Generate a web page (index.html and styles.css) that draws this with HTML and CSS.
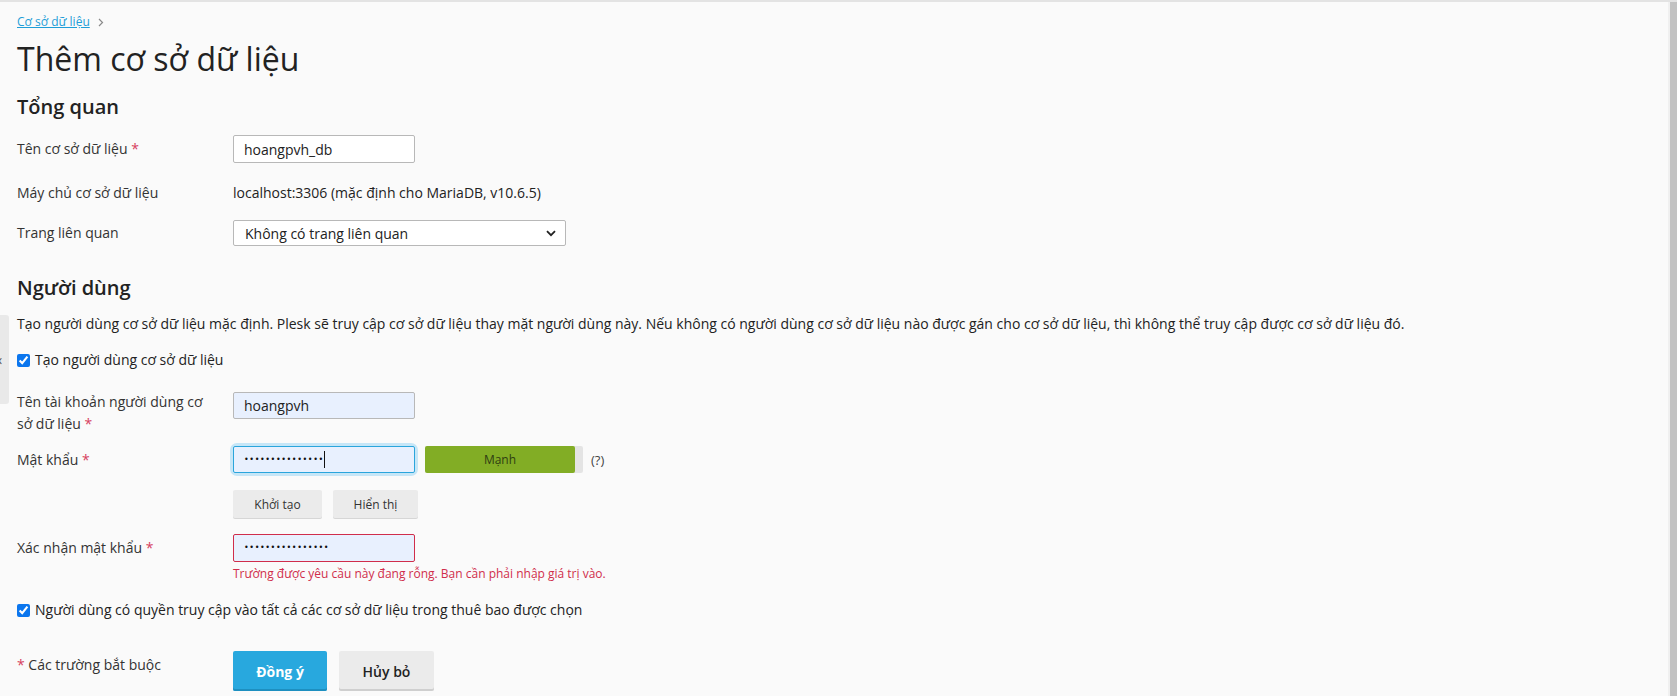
FILE: index.html
```html
<!DOCTYPE html>
<html lang="vi">
<head>
<meta charset="utf-8">
<title>Thêm cơ sở dữ liệu</title>
<link rel="stylesheet" href="styles.css">
</head>
<body>
<div class="frame">
  <div class="side-tab"><span class="side-arrow">‹</span></div>
  <main class="page">
    <nav class="breadcrumb"><a href="#">Cơ sở dữ liệu</a>
      <svg class="crumb-sep" width="6" height="9" viewBox="0 0 6 9"><path d="M1 1 4.5 4.5 1 8" fill="none" stroke="#8a8a8a" stroke-width="1.2"/></svg>
    </nav>
    <h1 class="title">Thêm cơ sở dữ liệu</h1>

    <h2 class="section">Tổng quan</h2>
    <div class="row row-db">
      <label class="label">Tên cơ sở dữ liệu <span class="req">*</span></label>
      <input class="field" type="text" value="hoangpvh_db">
    </div>
    <div class="row row-host">
      <div class="label">Máy chủ cơ sở dữ liệu</div>
      <div class="value">localhost:3306 (mặc định cho MariaDB, v10.6.5)</div>
    </div>
    <div class="row row-site">
      <label class="label">Trang liên quan</label>
      <div class="select"><span>Không có trang liên quan</span>
        <svg class="chev" width="10" height="7" viewBox="0 0 10 7"><path d="M1 1.2 5 5.2 9 1.2" fill="none" stroke="#222" stroke-width="1.8"/></svg>
      </div>
    </div>

    <h2 class="section section-user">Người dùng</h2>
    <p class="desc">Tạo người dùng cơ sở dữ liệu mặc định. Plesk sẽ truy cập cơ sở dữ liệu thay mặt người dùng này. Nếu không có người dùng cơ sở dữ liệu nào được gán cho cơ sở dữ liệu, thì không thể truy cập được cơ sở dữ liệu đó.</p>
    <label class="check check-create"><input type="checkbox" checked> Tạo người dùng cơ sở dữ liệu</label>

    <div class="row row-user">
      <label class="label label-wrap">Tên tài khoản người dùng cơ sở dữ liệu <span class="req">*</span></label>
      <input class="field autofill" type="text" value="hoangpvh">
    </div>
    <div class="row row-pass">
      <label class="label">Mật khẩu <span class="req">*</span></label>
      <div class="focus-wrap"><div class="field autofill focused"><span class="dots">•••••••••••••••</span><span class="caret"></span></div></div>
      <div class="meter"><div class="meter-fill">Mạnh</div></div>
      <span class="hint">(?)</span>
    </div>
    <div class="row row-gen">
      <div class="label"></div>
      <button class="btn btn-small btn-gen">Khởi tạo</button>
      <button class="btn btn-small btn-show">Hiển thị</button>
    </div>
    <div class="row row-confirm">
      <label class="label">Xác nhận mật khẩu <span class="req">*</span></label>
      <div class="field autofill invalid"><span class="dots">••••••••••••••••</span></div>
    </div>
    <div class="row row-error">
      <div class="label"></div>
      <div class="error">Trường được yêu cầu này đang rỗng. Bạn cần phải nhập giá trị vào.</div>
    </div>
    <label class="check check-access"><input type="checkbox" checked> Người dùng có quyền truy cập vào tất cả các cơ sở dữ liệu trong thuê bao được chọn</label>

    <div class="row row-actions">
      <div class="label"><span class="req">*</span> Các trường bắt buộc</div>
      <button class="btn btn-primary">Đồng ý</button>
      <button class="btn btn-cancel">Hủy bỏ</button>
    </div>
  </main>
  <div class="scrollbar"></div>
</div>
</body>
</html>
```
FILE: styles.css
```css
html, body {
  margin: 0;
  padding: 0;
  height: 100%;
  overflow: hidden;
}
body {
  background: #fafafa;
  font-family: "Open Sans", "Noto Sans", sans-serif;
  color: #222;
  font-size: 14px;
}
.frame {
  position: relative;
  height: 696px;
  border-top: 2px solid #e3e3e3;
  box-sizing: border-box;
  display: flex;
}
.page {
  flex: 1;
  padding: 0 17px;
}
.side-tab {
  position: absolute;
  left: 0;
  top: 313px;
  width: 9px;
  height: 89px;
  background: #e9e9e9;
  border-radius: 0 3px 3px 0;
}
.side-arrow {
  position: absolute;
  left: -2px;
  top: 38px;
  font-size: 14px;
  color: #555;
  line-height: 14px;
}
.scrollbar {
  width: 7px;
  background: #c2c2c2;
  border-left: 2px solid #f0f0f0;
}
.breadcrumb {
  margin-top: 12px;
  font-size: 12px;
  line-height: 16px;
  display: flex;
  align-items: center;
}
.breadcrumb a {
  color: #1f9ed8;
  text-decoration: underline;
}
.crumb-sep {
  margin-left: 8px;
}
.title {
  margin: 9px 0 0;
  font-size: 32px;
  font-weight: 400;
  line-height: 40px;
  color: #222;
}
.section {
  margin: 14px 0 0;
  font-size: 20px;
  font-weight: 600;
  line-height: 28px;
  color: #222;
}
.row {
  display: flex;
  align-items: flex-start;
}
.label {
  width: 216px;
  flex: none;
  line-height: 20px;
  color: #333;
}
.label-wrap {
  width: 196px;
  margin-right: 20px;
  line-height: 22px;
}
.req {
  color: #d6405e;
}
.row-db {
  margin-top: 14px;
  align-items: center;
}
.field {
  box-sizing: border-box;
  width: 182px;
  height: 28px;
  border: 1px solid #b8b8b8;
  border-radius: 2px;
  background: #fff;
  font-family: inherit;
  font-size: 14px;
  color: #222;
  padding: 0 10px;
  outline: none;
  display: flex;
  align-items: center;
}
.autofill {
  background: #e8f0fe;
  height: 27px;
}
.row-host {
  margin-top: 20px;
}
.value {
  line-height: 20px;
}
.row-site {
  margin-top: 17px;
  align-items: center;
}
.select {
  box-sizing: border-box;
  width: 333px;
  height: 26px;
  border: 1px solid #b8b8b8;
  border-radius: 2px;
  background: #fff;
  display: flex;
  align-items: center;
  justify-content: space-between;
  padding: 0 9px 0 11px;
}
.section-user {
  margin-top: 28px;
}
.desc {
  margin: 12px 0 0;
  line-height: 20px;
}
.check {
  display: flex;
  align-items: center;
  line-height: 20px;
}
.check input {
  margin: 0 5px 0 0;
  width: 13px;
  height: 13px;
  accent-color: #0b76ee;
}
.check-create {
  margin-top: 16px;
}
.row-user {
  margin-top: 21px;
}
.row-user .field {
  margin-top: 1px;
}
.row-pass {
  margin-top: 11px;
  align-items: center;
}
.focus-wrap {
  border-radius: 4px;
  box-shadow: 0 0 0 3px #c6e6f7;
}
.focused {
  border-color: #2aa5dc;
}
.dots {
  font-family: "DejaVu Sans", sans-serif;
  font-size: 8px;
  letter-spacing: 0.6px;
  line-height: 12px;
  color: #111;
}
.caret {
  display: inline-block;
  width: 1px;
  height: 17px;
  background: #111;
  margin-left: 0;
}
.meter {
  margin-left: 10px;
  width: 158px;
  height: 27px;
  background: #e4e4e4;
  border-radius: 2px;
}
.meter-fill {
  width: 150px;
  height: 27px;
  background: #82ad25;
  border-radius: 2px;
  text-align: center;
  line-height: 27px;
  font-size: 12px;
  color: #2f3d12;
}
.hint {
  margin-left: 8px;
  color: #444;
  font-size: 13px;
}
.row-gen {
  margin-top: 17px;
}
.btn {
  font-family: inherit;
  border: none;
  border-radius: 2px;
  cursor: pointer;
}
.btn-small {
  height: 28px;
  background: #ebebeb;
  color: #333;
  font-size: 12px;
  font-weight: 500;
  padding: 0;
  box-shadow: 0 1px 0 #d6d6d6;
}
.btn-gen {
  width: 89px;
}
.btn-show {
  width: 85px;
  margin-left: 11px;
}
.row-confirm {
  margin-top: 16px;
  align-items: center;
}
.invalid {
  border-color: #d02d4b;
  height: 28px;
}
.row-error {
  margin-top: 3px;
}
.error {
  font-size: 12px;
  line-height: 17px;
  color: #d02d4b;
}
.check-access {
  margin-top: 18px;
}
.row-actions {
  margin-top: 31px;
}
.row-actions .label {
  margin-top: 4px;
}
.btn-primary {
  width: 94px;
  height: 40px;
  background: #28a8de;
  color: #fff;
  font-weight: 700;
  font-size: 14px;
  box-shadow: inset 0 -2px 0 #1d8fc0;
}
.btn-cancel {
  width: 95px;
  height: 40px;
  margin-left: 12px;
  background: #ebebeb;
  color: #222;
  font-weight: 600;
  font-size: 14px;
  box-shadow: inset 0 -2px 0 #cfcfcf;
}
```
